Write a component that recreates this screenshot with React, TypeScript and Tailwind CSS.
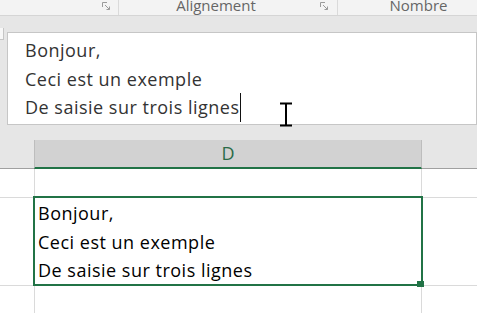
const font = "font-['Open_Sans',sans-serif]";

function Launcher() {
  return (
    <svg width="9" height="9" viewBox="0 0 9 9" className="mt-[2px]">
      <path d="M0.5 0.5 H5 M0.5 0.5 V5" stroke="#9a9a9a" strokeWidth="1" fill="none" />
      <path d="M3 3 L7.5 7.5 M7.5 4.5 V7.5 H4.5" stroke="#9a9a9a" strokeWidth="1" fill="none" />
    </svg>
  );
}

export default function App() {
  return (
    <div className={`relative w-[477px] h-[313px] overflow-hidden bg-[#e6e6e6] ${font}`}>
      {/* ribbon group labels */}
      <div className="flex h-[16px] bg-[#f3f3f3] border-b border-[#d5d5d5] text-[15px] leading-[14px] text-[#666]">
        <div className="flex w-[118px] justify-end pr-[7px]">
          <Launcher />
        </div>
        <div className="w-px bg-[#dadada]" />
        <div className="relative flex w-[218px] justify-center pr-[24px]">
          <span className="-mt-[2px]">Alignement</span>
          <div className="absolute right-[8px] top-0">
            <Launcher />
          </div>
        </div>
        <div className="w-px bg-[#dadada]" />
        <div className="flex flex-1 justify-center pl-[22px]">
          <span className="-mt-[2px]">Nombre</span>
        </div>
      </div>

      <div className="h-[16px]" />

      {/* formula bar */}
      <div className="flex h-[93px]">
        <div className="-mt-[4px] h-[12px] w-[4px] border-r border-b border-[#c6c6c6] bg-[#f7f7f7]" />
        <div className="ml-[3px] w-[470px] border border-[#c6c6c6] bg-white pl-[17px] pt-[3px] text-[18px] leading-[28.5px] tracking-[0.5px] text-[#333]">
          <div>Bonjour,</div>
          <div>Ceci est un exemple</div>
          <div className="flex items-center">
            <span>De saisie sur trois lignes</span>
            <span className="inline-block h-[29px] w-px bg-[#111]" />
          </div>
        </div>
      </div>

      <div className="h-[15px]" />

      {/* column header */}
      <div className="flex h-[29px]">
        <div className="w-[34px] border-b border-[#a0a0a0]" />
        <div className="flex w-[388px] items-center justify-center border-x border-[#bdbdbd] border-b-2 border-b-[#217346] bg-[#d2d2d2] text-[18px] text-[#2a6b48]">
          D
        </div>
        <div className="flex-1 border-b border-[#a0a0a0]" />
      </div>

      {/* grid */}
      <div className="bg-white">
        <div className="flex h-[29px] border-b border-[#dadada]">
          <div className="w-[35px] border-r border-[#dadada]" />
          <div className="w-[387px] border-r border-[#dadada]" />
          <div className="flex-1" />
        </div>
        <div className="flex h-[88px] border-b border-[#dadada]">
          <div className="w-[35px] border-r border-[#dadada]" />
          <div className="w-[387px] border-r border-[#dadada]" />
          <div className="flex-1" />
        </div>
        <div className="flex h-[40px]">
          <div className="w-[35px] border-r border-[#dadada]" />
          <div className="w-[387px] border-r border-[#dadada]" />
          <div className="flex-1" />
        </div>
      </div>

      {/* selected cell */}
      <div className="absolute left-[33px] top-[196px] h-[90px] w-[390px] border-2 border-[#217346] pl-[3px] pt-px text-[18px] leading-[28.5px] tracking-[0.5px] text-black">
        <div>Bonjour,</div>
        <div>Ceci est un exemple</div>
        <div>De saisie sur trois lignes</div>
      </div>
      <div className="absolute left-[417px] top-[281px] h-[6px] w-[7px] bg-[#217346]" />

      {/* I-beam mouse cursor */}
      <svg className="absolute left-[279px] top-[102px]" width="14" height="25" viewBox="0 0 14 25">
        <path d="M1 1.5 H13 M7 1.5 V23.5 M1 23.5 H13" stroke="#000" strokeWidth="2" fill="none" />
      </svg>
    </div>
  );
}
